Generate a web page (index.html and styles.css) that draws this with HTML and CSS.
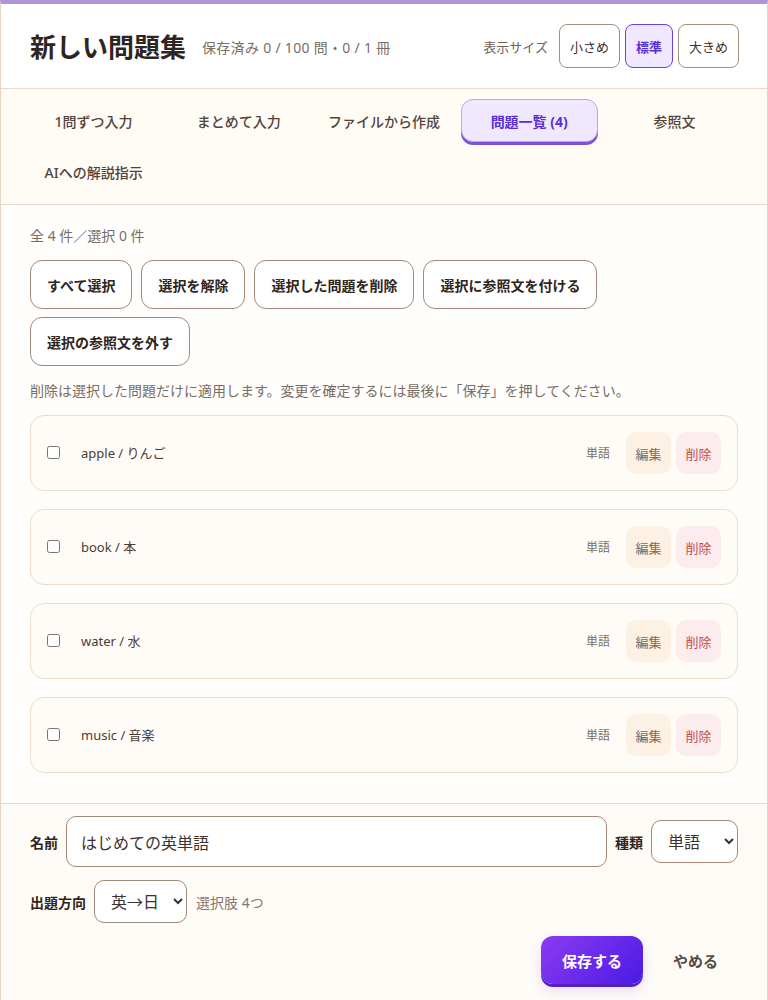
FILE: index.html
```html
<!DOCTYPE html>
<html lang="ja">
<head>
    <meta charset="UTF-8">
    <title>新しい問題集</title>
    <link rel="stylesheet" href="styles.css">
</head>
<body>
<div class="editor">
    <header class="editor__header">
        <h1 class="editor__title">新しい問題集</h1>
        <span class="editor__meta">保存済み 0 / 100 問・0 / 1 冊</span>
        <div class="size">
            <span class="size__label">表示サイズ</span>
            <button class="size__btn">小さめ</button>
            <button class="size__btn size__btn--active">標準</button>
            <button class="size__btn">大きめ</button>
        </div>
    </header>

    <nav class="tabs">
        <button class="tabs__item">1問ずつ入力</button>
        <button class="tabs__item">まとめて入力</button>
        <button class="tabs__item">ファイルから作成</button>
        <button class="tabs__item tabs__item--active">問題一覧 (4)</button>
        <button class="tabs__item">参照文</button>
        <button class="tabs__item">AIへの解説指示</button>
    </nav>

    <section class="list">
        <div class="list__count">全 4 件／選択 0 件</div>
        <div class="list__actions">
            <button class="action">すべて選択</button>
            <button class="action">選択を解除</button>
            <button class="action">選択した問題を削除</button>
            <button class="action">選択に参照文を付ける</button>
            <button class="action">選択の参照文を外す</button>
        </div>
        <p class="list__note">削除は選択した問題だけに適用します。変更を確定するには最後に「保存」を押してください。</p>

        <div class="list__items">
            <div class="item">
                <input type="checkbox" class="item__check">
                <span class="item__text">apple / りんご</span>
                <span class="item__type">単語</span>
                <button class="item__btn item__btn--edit">編集</button>
                <button class="item__btn item__btn--delete">削除</button>
            </div>
            <div class="item">
                <input type="checkbox" class="item__check">
                <span class="item__text">book / 本</span>
                <span class="item__type">単語</span>
                <button class="item__btn item__btn--edit">編集</button>
                <button class="item__btn item__btn--delete">削除</button>
            </div>
            <div class="item">
                <input type="checkbox" class="item__check">
                <span class="item__text">water / 水</span>
                <span class="item__type">単語</span>
                <button class="item__btn item__btn--edit">編集</button>
                <button class="item__btn item__btn--delete">削除</button>
            </div>
            <div class="item">
                <input type="checkbox" class="item__check">
                <span class="item__text">music / 音楽</span>
                <span class="item__type">単語</span>
                <button class="item__btn item__btn--edit">編集</button>
                <button class="item__btn item__btn--delete">削除</button>
            </div>
        </div>
    </section>

    <footer class="form">
        <div class="form__row">
            <label class="form__label">名前</label>
            <input class="form__input" type="text" value="はじめての英単語">
            <label class="form__label">種類</label>
            <select class="form__select form__select--kind">
                <option>単語</option>
            </select>
        </div>
        <div class="form__row">
            <label class="form__label">出題方向</label>
            <select class="form__select form__select--dir">
                <option>英→日</option>
            </select>
            <span class="form__hint">選択肢 4つ</span>
        </div>
        <div class="form__row form__row--end">
            <button class="form__save">保存する</button>
            <button class="form__cancel">やめる</button>
        </div>
    </footer>
</div>
</body>
</html>
```

FILE: styles.css
```css
body {
    margin: 0;
    background: #fff;
    font-family: "Noto Sans", "Noto Sans CJK JP", sans-serif;
    color: #3d322c;
}

button, input, select {
    font-family: inherit;
}

.editor {
    border-top: 4px solid #ad95d6;
    border-left: 1px solid #e8d6c4;
    border-right: 1px solid #e8d6c4;
    min-height: 996px;
    background: #fffcf8;
}

.editor__header {
    display: flex;
    align-items: center;
    height: 84px;
    padding: 0 28px 0 29px;
    background: #fff;
    border-bottom: 1px solid #ead9c8;
}

.editor__title {
    margin: 0;
    font-size: 26px;
    font-weight: 700;
    color: #2e2520;
}

.editor__meta {
    margin-left: 16px;
    font-size: 14px;
    color: #7a6d64;
    padding-top: 2px;
    letter-spacing: 0.3px;
}

.size {
    margin-left: auto;
    display: flex;
    align-items: center;
    gap: 5px;
}

.size__label {
    font-size: 13px;
    color: #6f635b;
    margin-right: 6px;
}

.size__btn {
    height: 44px;
    padding: 0 10px;
    border: 1px solid #a38f82;
    border-radius: 8px;
    background: #fff;
    font-size: 13px;
    color: #3d322c;
}

.size__btn--active {
    background: #efe8ff;
    border-color: #6b3fe0;
    color: #5a2fd4;
    font-weight: 700;
}

.tabs {
    display: grid;
    grid-template-columns: repeat(5, 1fr);
    gap: 8px;
    padding: 10px 24px 11px;
    background: #fffbf5;
    border-bottom: 1px solid #ead9c8;
}

.tabs__item {
    height: 43px;
    border: 1px solid transparent;
    border-radius: 12px;
    background: none;
    font-size: 14px;
    font-weight: 500;
    color: #51443c;
}

.tabs__item--active {
    background: #efe8ff;
    border-color: #bda4ee;
    box-shadow: 0 3px 0 #7b52d4;
    color: #5a30d0;
    font-weight: 700;
}

.list {
    padding: 20px 29px 30px;
    background: #fffefc;
    border-bottom: 1px solid #ead9c8;
}

.list__count {
    font-size: 14px;
    color: #7a6d64;
}

.list__actions {
    display: flex;
    flex-wrap: wrap;
    gap: 8px 9px;
    margin-top: 15px;
}

.action {
    height: 49px;
    padding: 0 16px;
    border: 1px solid #a38878;
    border-radius: 12px;
    background: #fff;
    font-size: 14px;
    font-weight: 700;
    color: #2e2520;
}

.list__note {
    margin: 14px 0 0;
    font-size: 14px;
    color: #7a6d64;
}

.list__items {
    display: flex;
    flex-direction: column;
    gap: 18px;
    margin-top: 15px;
}

.item {
    display: flex;
    align-items: center;
    padding: 16px;
    border: 1px solid #eddcc8;
    border-radius: 14px;
    background: #fffcf8;
}

.item__check {
    margin: 0 0 2px 0;
    width: 13px;
    height: 13px;
}

.item__text {
    margin-left: 21px;
    font-size: 13px;
    color: #4a3d35;
    margin-bottom: 2px;
}

.item__type {
    margin-left: auto;
    margin-right: 16px;
    font-size: 12px;
    color: #7a6d64;
}

.item__btn {
    width: 45px;
    height: 42px;
    border: none;
    border-radius: 10px;
    font-size: 13px;
}

.item__btn--edit {
    background: #fdf1e4;
    color: #7b6a60;
}

.item__btn--delete {
    margin-left: 5px;
    background: #fdeced;
    color: #c24f4f;
}

.form {
    padding: 12px 29px;
}

.form__row {
    display: flex;
    align-items: center;
    gap: 8px;
    margin-bottom: 13px;
}

.form__row--end {
    justify-content: flex-end;
    gap: 10px;
}

.form__label {
    font-size: 14px;
    font-weight: 700;
    color: #2e2520;
    white-space: nowrap;
}

.form__input {
    flex: 1;
    height: 51px;
    box-sizing: border-box;
    padding: 0 14px;
    border: 1px solid #a38878;
    border-radius: 10px;
    background: #fff;
    font-size: 16px;
    color: #3d322c;
}

.form__select {
    height: 43px;
    padding: 0 8px 0 12px;
    border: 1px solid #a38878;
    border-radius: 10px;
    background: #fff;
    font-size: 16px;
    color: #3d322c;
}

.form__select--kind {
    width: 87px;
}

.form__select--dir {
    width: 93px;
}

.form__hint {
    margin-left: 1px;
    font-size: 14px;
    color: #857870;
}

.form__save {
    height: 48px;
    padding: 0 21px;
    border: none;
    border-radius: 12px;
    background: linear-gradient(135deg, #8b3cf0, #4a1ae6);
    box-shadow: 0 3px 0 #5620c4, 0 6px 14px rgba(110, 60, 230, 0.18);
    font-size: 15px;
    font-weight: 700;
    color: #fff;
}

.form__cancel {
    height: 48px;
    padding: 0 20px;
    border: none;
    background: none;
    font-size: 15px;
    font-weight: 700;
    color: #5a4c43;
}
```
